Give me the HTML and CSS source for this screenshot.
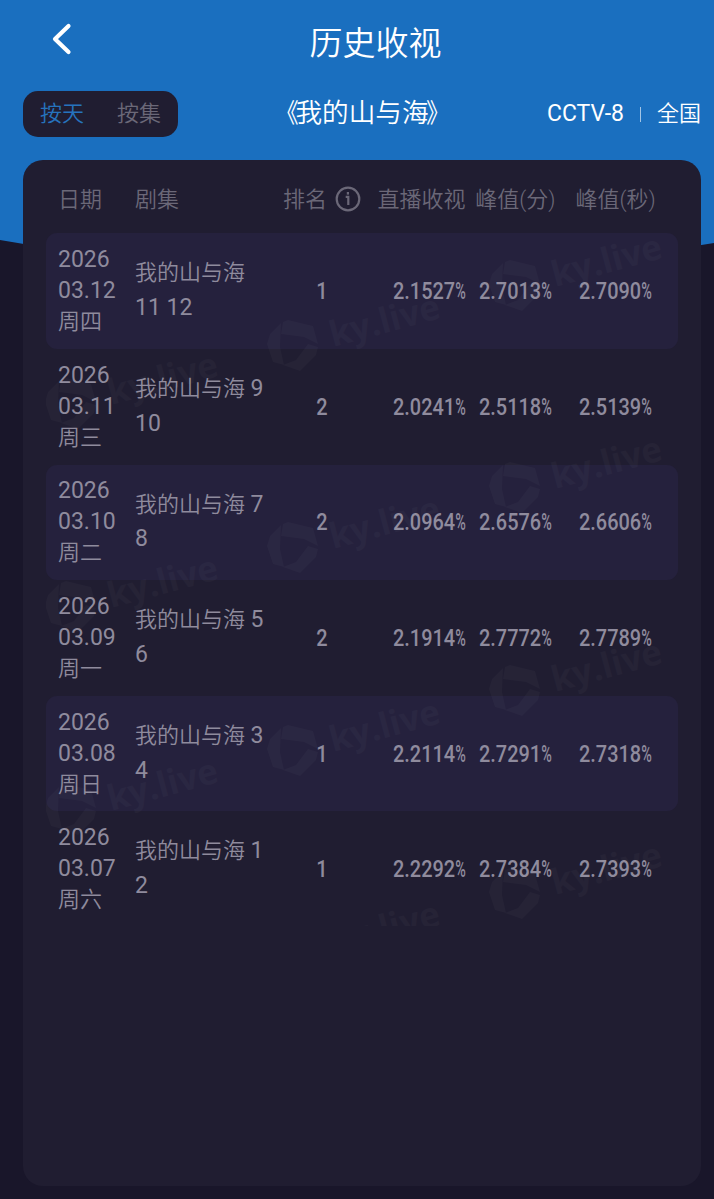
FILE: index.html
```html
<!DOCTYPE html>
<html lang="zh-CN">
<head>
  <meta charset="UTF-8">
  <meta name="viewport" content="width=device-width, initial-scale=1.0">
  <title>历史收视</title>
  <link rel="stylesheet" href="styles.css">
</head>
<body>
  <!-- 顶部导航 -->
  <header class="nav">
    <button class="back-btn" aria-label="返回">
      <svg viewBox="0 0 20 32"><path d="M16.5 3L3 16l13.5 13"/></svg>
    </button>
    <h1>历史收视</h1>
  </header>

  <!-- 筛选栏 -->
  <div class="filter">
    <div class="tabs">
      <span class="tab active">按天</span>
      <span class="tab">按集</span>
    </div>
    <h2><span class="quote">《</span>我的山与海<span class="quote end">》</span></h2>
    <div class="channel">
      <span class="channel-name">CCTV-8</span>
      <i class="divider"></i>
      <span class="area">全国</span>
    </div>
  </div>

  <!-- 收视列表 -->
  <main class="card">
    <div class="row head">
      <span>日期</span>
      <span>剧集</span>
      <span class="rank">排名
        <svg class="info" viewBox="0 0 26 26"><circle cx="13" cy="13" r="11.3"/><path d="M10.7 10.8h2.6v8.2"/><path d="M12.9 6v2.6"/></svg>
      </span>
      <span class="live">直播收视</span>
      <span class="peak">峰值(分)</span>
      <span class="peak">峰值(秒)</span>
    </div>

    <div class="list">
      <div class="row">
        <div class="date"><b>2026</b><b>03.12</b>周四</div>
        <div class="episode">我的山与海<br><b>11 12</b></div>
        <div class="rank"><span class="din">1</span></div>
        <div class="live"><span class="din">2.1527<i>%</i></span></div>
        <div class="peak"><span class="din">2.7013<i>%</i></span></div>
        <div class="peak"><span class="din">2.7090<i>%</i></span></div>
      </div>
      <div class="row">
        <div class="date"><b>2026</b><b>03.11</b>周三</div>
        <div class="episode">我的山与海 <b>9</b><br><b>10</b></div>
        <div class="rank"><span class="din">2</span></div>
        <div class="live"><span class="din">2.0241<i>%</i></span></div>
        <div class="peak"><span class="din">2.5118<i>%</i></span></div>
        <div class="peak"><span class="din">2.5139<i>%</i></span></div>
      </div>
      <div class="row">
        <div class="date"><b>2026</b><b>03.10</b>周二</div>
        <div class="episode">我的山与海 <b>7</b><br><b>8</b></div>
        <div class="rank"><span class="din">2</span></div>
        <div class="live"><span class="din">2.0964<i>%</i></span></div>
        <div class="peak"><span class="din">2.6576<i>%</i></span></div>
        <div class="peak"><span class="din">2.6606<i>%</i></span></div>
      </div>
      <div class="row">
        <div class="date"><b>2026</b><b>03.09</b>周一</div>
        <div class="episode">我的山与海 <b>5</b><br><b>6</b></div>
        <div class="rank"><span class="din">2</span></div>
        <div class="live"><span class="din">2.1914<i>%</i></span></div>
        <div class="peak"><span class="din">2.7772<i>%</i></span></div>
        <div class="peak"><span class="din">2.7789<i>%</i></span></div>
      </div>
      <div class="row">
        <div class="date"><b>2026</b><b>03.08</b>周日</div>
        <div class="episode">我的山与海 <b>3</b><br><b>4</b></div>
        <div class="rank"><span class="din">1</span></div>
        <div class="live"><span class="din">2.2114<i>%</i></span></div>
        <div class="peak"><span class="din">2.7291<i>%</i></span></div>
        <div class="peak"><span class="din">2.7318<i>%</i></span></div>
      </div>
      <div class="row">
        <div class="date"><b>2026</b><b>03.07</b>周六</div>
        <div class="episode">我的山与海 <b>1</b><br><b>2</b></div>
        <div class="rank"><span class="din">1</span></div>
        <div class="live"><span class="din">2.2292<i>%</i></span></div>
        <div class="peak"><span class="din">2.7384<i>%</i></span></div>
        <div class="peak"><span class="din">2.7393<i>%</i></span></div>
      </div>

      <!-- 水印 -->
      <svg class="watermark" viewBox="0 0 632 693" aria-hidden="true">
        <defs>
          <g id="mark">
            <path d="M-11-22L-22-11-25-1-19 17-8 20-12 2z"/>
            <path d="M-9-23L-4-25 21-19 26-1 12-8-11-11z"/>
            <path d="M16-1L26 2 24 10 8 26-9 20 4 15z"/>
            <text x="41" y="2" transform="rotate(-15 41 2)" textLength="113" lengthAdjust="spacingAndGlyphs">ky.live</text>
          </g>
        </defs>
        <use href="#mark" x="24" y="170"/>
        <use href="#mark" x="24" y="373"/>
        <use href="#mark" x="24" y="576"/>
        <use href="#mark" x="246" y="112"/>
        <use href="#mark" x="246" y="314"/>
        <use href="#mark" x="246" y="517"/>
        <use href="#mark" x="246" y="719"/>
        <use href="#mark" x="468" y="52"/>
        <use href="#mark" x="468" y="254"/>
        <use href="#mark" x="468" y="457"/>
        <use href="#mark" x="468" y="660"/>
      </svg>
    </div>
  </main>
</body>
</html>
```
FILE: styles.css
```css
:root {
  --blue: #1a6fbf;
  --bg: #19162a;
  --card: #201d31;
  --row: #25213d;
  --text: #8f8b9d;
  --muted: #6b6878;
}

* {
  margin: 0;
  padding: 0;
  box-sizing: border-box;
}

body {
  position: relative;
  display: flex;
  flex-direction: column;
  height: 1199px;
  padding: 0 13px 13px 23px;
  overflow: hidden;
  font-family: Roboto, "Noto Sans CJK SC", sans-serif;
  font-size: 22px;
  font-weight: 350;
  color: #fff;
  background-color: var(--bg);
}

/* 蓝色背景 */
body::before {
  content: '';
  position: absolute;
  top: 0;
  left: 0;
  z-index: -1;
  width: 100%;
  height: 300px;
  background-color: var(--blue);
  clip-path: polygon(0 0, 100% 0, 100% 243px, 50% 300px, 0 240px);
}

/* 导航 */
.nav {
  display: grid;
  grid-template-columns: 80px 1fr 53px;
  align-items: center;
  height: 84px;
}

.back-btn {
  width: 20px;
  height: 32px;
  margin: 0 0 6px 29px;
  border: none;
  background: none;
}

.back-btn svg {
  display: block;
  width: 20px;
  height: 32px;
  fill: none;
  stroke: #fff;
  stroke-width: 4.2;
  stroke-linecap: round;
  stroke-linejoin: round;
}

.nav h1 {
  padding-bottom: 3px;
  font-size: 33px;
  font-weight: 350;
  text-align: center;
}

/* 筛选栏 */
.filter {
  display: grid;
  grid-template-columns: 155px 1fr 155px;
  align-items: center;
  height: 76px;
  padding-bottom: 17px;
}

.tabs {
  display: flex;
  justify-content: space-between;
  align-items: center;
  height: 46px;
  padding: 0 17px 5px;
  border-radius: 15px;
  background-color: var(--card);
}

.tab {
  color: var(--muted);
}

.tab.active {
  color: #2673bd;
}

.filter h2 {
  padding-bottom: 6px;
  font-size: 26.6px;
  font-weight: 350;
  text-align: center;
}

.quote {
  display: inline-block;
  transform: translateX(3px) scaleX(0.9);
  transform-origin: right;
}

.quote.end {
  transform: translateX(-2px) scaleX(0.9);
  transform-origin: left;
}

.channel {
  display: flex;
  justify-content: flex-end;
  align-items: center;
}

.channel-name {
  padding-bottom: 1px;
  font-size: 23px;
  font-weight: 400;
}

.area {
  padding-bottom: 5px;
}

.divider {
  width: 1px;
  height: 15px;
  margin: 2px 16px 0;
  background-color: rgba(255, 255, 255, 0.6);
}

/* 卡片 */
.card {
  flex: 1;
  padding: 0 23px;
  border-radius: 20px;
  background-color: var(--card);
}

.row {
  display: grid;
  grid-template-columns: 77px 135px 104px 91.5px 99.5px 101px;
  align-items: center;
  height: 115.6px;
  padding-left: 12px;
  border-radius: 11px;
  color: var(--text);
}

.row.head {
  height: 73.4px;
  color: var(--muted);
}

.list {
  position: relative;
}

.list .row:nth-child(odd) {
  background-color: var(--row);
}

.row b {
  font-size: 23px;
  font-weight: 400;
}

.date {
  padding-bottom: 1px;
  line-height: 31px;
}

.date b {
  display: block;
}

.episode {
  line-height: 34.7px;
}

.rank,
.peak {
  text-align: center;
}

.head .rank {
  display: flex;
  justify-content: center;
  align-items: center;
  gap: 8px;
}

.live {
  text-align: right;
}

.info {
  width: 26px;
  height: 26px;
  margin-top: 5px;
  fill: none;
  stroke: var(--muted);
  stroke-width: 2.2;
}

/* 窄体数字 */
.din {
  display: inline-block;
  width: 73px;
  font-size: 24px;
  font-weight: 500;
  text-align: left;
  white-space: nowrap;
  transform: scaleX(0.83);
  transform-origin: left;
}

.rank .din {
  width: auto;
  transform-origin: center;
}

.din i {
  display: inline-block;
  font-style: normal;
  transform: scaleX(0.72);
  transform-origin: left;
}

/* 水印 */
.watermark {
  position: absolute;
  top: 0;
  left: 0;
  width: 632px;
  height: 693px;
  overflow: hidden;
  fill: #fff;
  opacity: 0.024;
  pointer-events: none;
}

.watermark text {
  font-family: "Open Sans", sans-serif;
  font-size: 35px;
  font-weight: 700;
}
```
